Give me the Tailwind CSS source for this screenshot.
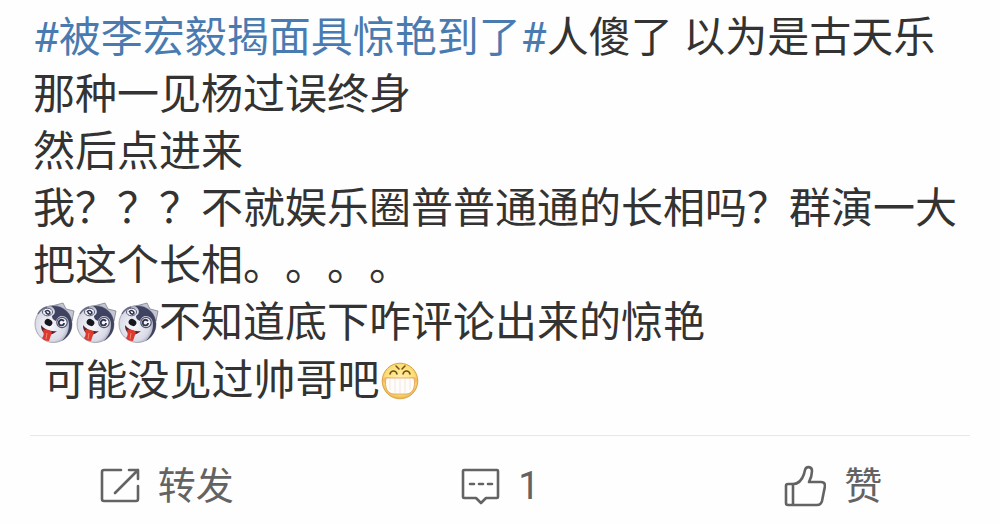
<!DOCTYPE html>
<html lang="zh-CN">
<head>
<meta charset="utf-8">
<meta name="viewport" content="width=device-width, initial-scale=1">
<title>微博</title>
<script src="https://cdn.jsdelivr.net/npm/@tailwindcss/browser@4"></script>
</head>
<body class="bg-[#fefefe] font-[Roboto,'Noto_Sans_CJK_SC',sans-serif] text-[#333333] [text-spacing-trim:space-all]">
<svg class="absolute size-0" aria-hidden="true">
  <defs>
    <radialGradient id="fur" cx="40%" cy="55%" r="60%">
      <stop offset="0" stop-color="#f8f8fc"/><stop offset=".7" stop-color="#d9dae6"/><stop offset="1" stop-color="#8d90a4"/>
    </radialGradient>
    <radialGradient id="gold" cx="50%" cy="45%" r="55%">
      <stop offset="0" stop-color="#fff0a8"/><stop offset=".75" stop-color="#fddf78"/><stop offset="1" stop-color="#eab44a"/>
    </radialGradient>
    <symbol id="husky" viewBox="0 0 42 42">
      <path d="M19 4 30 1l3 6 8 2-2 10z" fill="#c4c6d2" stroke="#7d8090" stroke-width=".8"/>
      <circle cx="20.500" cy="22" r="18.500" fill="url(#fur)" stroke="#8b8d9e" stroke-width=".7"/>
      <path d="M18 4C30 3 39 11 39 22c0 8-4 13-10 17 5-6 7-10 7-17 0-5-3-8-7-8-3 0-5 2-6 5-3-1-4-3-4-5 4-2 4-7-1-10z" fill="#3f4260"/>
      <path d="M5 12c2-4 5-6 9-7" fill="none" stroke="#6a6d84" stroke-width="1.500"/>
      <ellipse cx="14.500" cy="10" rx="5" ry="3.800" fill="#f4f4fa" stroke="#555872" stroke-width="1"/>
      <path d="M12 10c2-3 5-1 5 1-1 2-4 1-4-1" fill="none" stroke="#30334d" stroke-width="1.600"/>
      <circle cx="29" cy="20.500" r="5.200" fill="#f4f4fa" stroke="#50536f" stroke-width="1.200"/>
      <path d="M31 19c-3-3-6 0-5 3 1 2 5 2 5-1" fill="none" stroke="#30334d" stroke-width="1.800"/>
      <ellipse cx="15.500" cy="20.500" rx="4" ry="3.300" fill="#17181f" transform="rotate(30 15.500 20.500)"/>
      <path d="M8 23c3 4 9 7 16 6-4 4-10 5-13 2-2-2-3-4-3-8z" fill="#5a2029"/>
      <path d="M10 28c3-1 7 0 9 2l-3 9c-3 0-6-1-7-3 2-2 2-5 1-8z" fill="#dc392f"/>
      <path d="m14 31-1 6" stroke="#f58271"/>
    </symbol>
    <symbol id="grin" viewBox="0 0 42 42">
      <circle cx="21" cy="21" r="17.800" fill="url(#gold)" stroke="#d9a44a"/>
      <ellipse cx="8" cy="20" rx="4" ry="3" fill="#f99a55" opacity=".5"/><ellipse cx="34" cy="20" rx="4" ry="3" fill="#f99a55" opacity=".5"/>
      <path d="m17 6 3 3M26 6l-3 3M11 14c1-4 6-4 7 0M24 14c1-4 6-4 7 0" fill="none" stroke="#704c1d" stroke-width="1.500" stroke-linecap="round"/>
      <path d="M7 18h28c2 10-2 16-8 16H15C9 34 5 28 7 18z" fill="#fffdfa" stroke="#dc9c60" stroke-width=".8"/>
      <path d="M11 19v11M16 19v14M21 19v14M26 19v14M31 19v11" stroke="#f3e6df" fill="none"/>
    </symbol>
  </defs>
</svg>
<article>
  <div class="pt-[9px] pr-7 pl-[33px] text-[42px]">
    <p class="leading-[57px]"><a href="#topic" class="text-[#4a7bb0]">#被李宏毅揭面具惊艳到了#</a>人傻了 以为是古天乐<br>那种一见杨过误终身</p>
    <p class="leading-[57px]">然后点进来</p>
    <p class="leading-[57px]">我？？？不就娱乐圈普普通通的长相吗？群演一大把这个长相。。。。</p>
    <p class="flex items-center leading-[58px]"><svg class="size-[42px] shrink-0" role="img" aria-label="二哈"><use href="#husky"/></svg><svg class="size-[42px] shrink-0" role="img" aria-label="二哈"><use href="#husky"/></svg><svg class="size-[42px] shrink-0" role="img" aria-label="二哈"><use href="#husky"/></svg><span>不知道底下咋评论出来的惊艳</span></p>
    <p class="flex items-center leading-[58px]"><span>&nbsp;可能没见过帅哥吧</span><svg class="size-[42px] shrink-0" role="img" aria-label="嘻嘻"><use href="#grin"/></svg></p>
  </div>
  <hr class="mx-[30px] mt-[25px] border-[#e8e8e8]">
  <footer class="grid grid-cols-3 pt-[26px] text-[38px] leading-[48px] text-[#636363]">
    <button type="button" class="flex items-center justify-center gap-[18px]">
      <svg class="size-10" viewBox="0 0 40 40" fill="none" stroke="currentColor" stroke-width="2.600" stroke-linecap="round" stroke-linejoin="round" aria-hidden="true"><path d="M21 4H4q-2 0-2 2v27q0 2 2 2h32q2 0 2-2V20M15 27 38 4M29 4h9v9"/></svg>
      <span>转发</span>
    </button>
    <button type="button" class="flex items-center justify-center gap-[18px]" aria-label="评论 1">
      <svg class="size-10" viewBox="0 0 40 40" fill="none" stroke="currentColor" stroke-width="2.600" stroke-linecap="round" stroke-linejoin="round" aria-hidden="true"><path d="M4 4h33q1 0 1 1v26q0 1-1 1H26l-5 5-5-5H4q-1 0-1-1V5q0-1 1-1z"/><path d="M10 18h4M19 18h4M28 18h4"/></svg>
      <span>1</span>
    </button>
    <button type="button" class="flex items-center justify-center gap-[18px]">
      <svg class="size-[42px]" viewBox="0 0 42 42" fill="none" stroke="currentColor" stroke-width="2.600" stroke-linecap="round" stroke-linejoin="round" aria-hidden="true"><path d="M9 19H4q-2 0-2 2v17q0 2 2 2h5zM9 19c6 0 9-4 11-10l1-4c1-4 7-4 7 1 0 4-1 7-3 11h12q4 0 4 4l-3 15q-1 4-5 4H9"/></svg>
      <span>赞</span>
    </button>
  </footer>
</article>
</body>
</html>
